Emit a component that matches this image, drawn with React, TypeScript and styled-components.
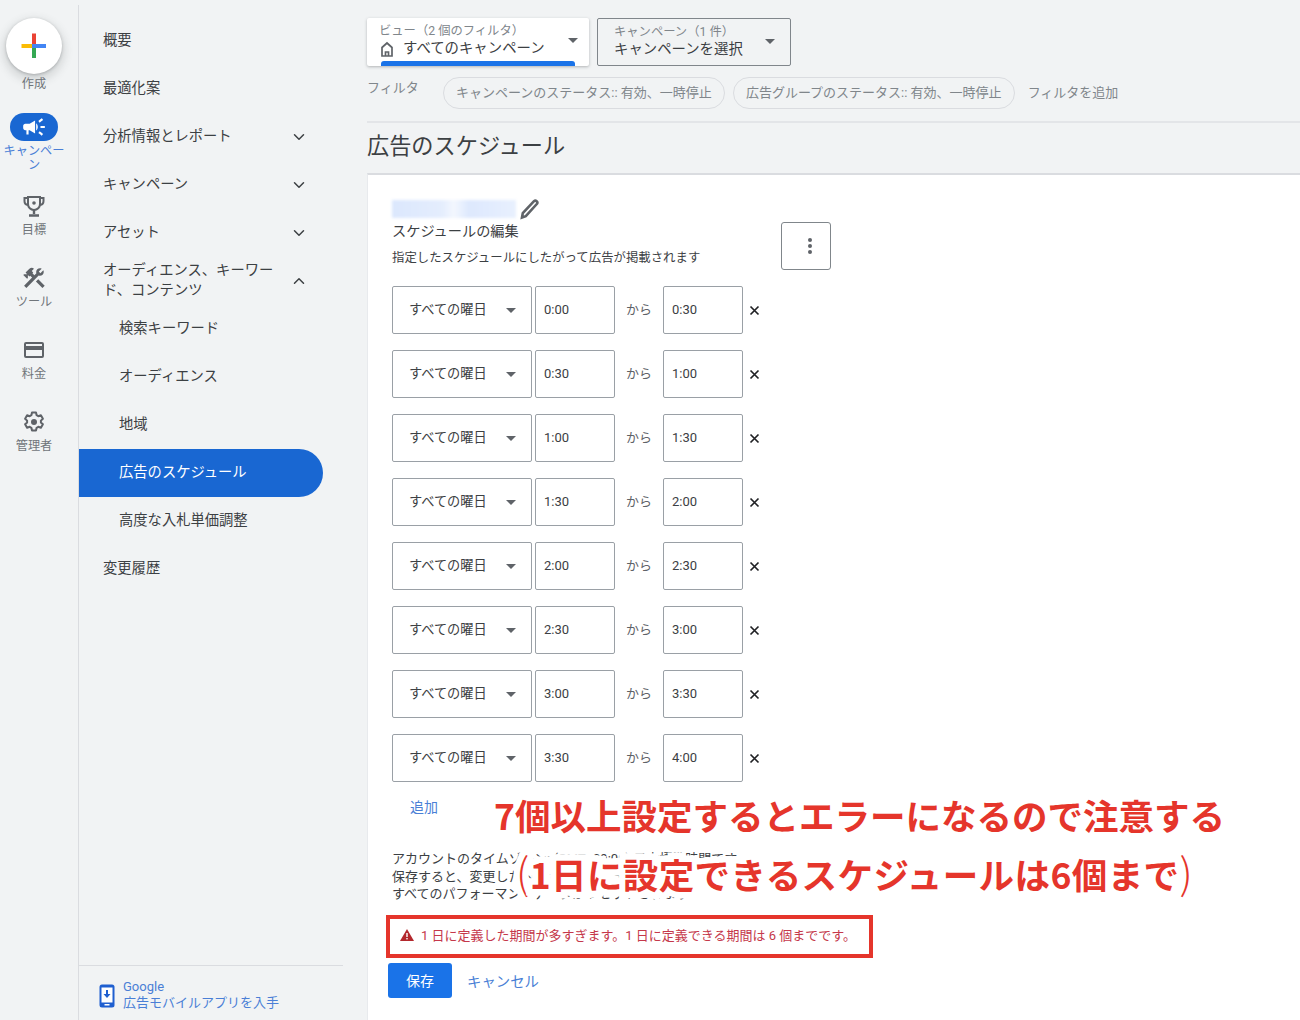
import React from "react";
import styled, { createGlobalStyle } from "styled-components";
import { ChevronDown, ChevronUp } from "lucide-react";
import { MdCampaign, MdConstruction } from "react-icons/md";

const JP = `"Roboto", "Noto Sans CJK JP", sans-serif`;

const GlobalStyle = createGlobalStyle`
  html, body { margin: 0; padding: 0; background: #f1f3f4; }
  body { font-family: ${JP}; color: #3c4043; }
  * { box-sizing: border-box; }
`;

const Page = styled.div`
  position: relative;
  width: 1300px;
  height: 1020px;
  overflow: hidden;
  display: flex;
  background: #f1f3f4;
`;

const Rail = styled.aside`
  width: 79px;
  margin-top: 5px;
  padding-right: 10px;
  border-right: 1px solid #dadce0;
  display: flex;
  flex-direction: column;
  align-items: center;
  flex: none;
`;

const CreateButton = styled.div`
  width: 56px;
  height: 56px;
  margin-top: 13px;
  border-radius: 50%;
  background: #fff;
  box-shadow: 0 1px 3px rgba(60, 64, 67, 0.3), 0 4px 8px 3px rgba(60, 64, 67, 0.15);
  display: flex;
  align-items: center;
  justify-content: center;
`;

const RailLabel = styled.div<{ $active?: boolean }>`
  font-size: 12.2px;
  line-height: 14px;
  text-align: center;
  width: 64px;
  color: ${(p) => (p.$active ? "#4a7fd6" : "#70757a")};
`;

const RailItem = styled.div<{ $h: number; $pad?: number }>`
  height: ${(p) => p.$h}px;
  padding-top: ${(p) => p.$pad ?? 0}px;
  display: flex;
  flex-direction: column;
  align-items: center;
`;

const RailIconWrap = styled.div`
  height: 26px;
  display: flex;
  align-items: center;
  justify-content: center;
  margin-bottom: 4px;
`;

const ActivePill = styled.div`
  width: 48px;
  height: 28px;
  border-radius: 14px;
  background: #1967d2;
  display: flex;
  align-items: center;
  justify-content: center;
  margin-bottom: 3px;
`;

const Nav = styled.nav`
  width: 264px;
  flex: none;
  display: flex;
  flex-direction: column;
  padding-top: 17px;
  position: relative;
`;

const NavRow = styled.div<{ $sub?: boolean; $active?: boolean }>`
  width: 244px;
  height: 48px;
  flex: none;
  display: flex;
  align-items: center;
  justify-content: space-between;
  padding: 0 15px 3px ${(p) => (p.$sub ? 40 : 24)}px;
  font-size: 14.3px;
  line-height: 20px;
  color: ${(p) => (p.$active ? "#fff" : "#3c4043")};
  background: ${(p) => (p.$active ? "#1967d2" : "transparent")};
  border-radius: 0 24px 24px 0;
`;

const NavText = styled.span`
  max-width: 175px;
`;

const NavChevronDown = styled(ChevronDown)`
  margin-top: 3px;
`;

const NavChevronUp = styled(ChevronUp)`
  margin-top: 2px;
`;

const NavFooter = styled.div`
  margin-top: auto;
  height: 55px;
  border-top: 1px solid #dadce0;
  display: flex;
  align-items: flex-start;
  gap: 8px;
  padding: 13px 0 0 20px;
  color: #4a7fd6;
  font-size: 13px;
  line-height: 16px;
`;

const PhoneIcon = styled.div`
  margin-top: 5px;
`;

const Main = styled.main`
  flex: 1;
  margin-left: 24px;
  display: flex;
  flex-direction: column;
  min-width: 0;
`;

const PickerRow = styled.div`
  display: flex;
  gap: 8px;
  padding-top: 18px;
`;

const Picker = styled.div<{ $selected?: boolean }>`
  position: relative;
  height: 48px;
  width: ${(p) => (p.$selected ? 222 : 194)}px;
  border-radius: 2px;
  padding: 5px 0 0 ${(p) => (p.$selected ? 12 : 16)}px;
  background: ${(p) => (p.$selected ? "#fff" : "transparent")};
  border: ${(p) => (p.$selected ? "none" : "1px solid #80868b")};
  box-shadow: ${(p) => (p.$selected ? "0 1px 3px rgba(60,64,67,.35)" : "none")};
`;

const PickerLabel = styled.div`
  font-size: 12.3px;
  line-height: 15px;
  margin-top: 1px;
  color: #80868b;
`;

const PickerValue = styled.div`
  display: flex;
  align-items: center;
  gap: 8px;
  font-size: 14.4px;
  line-height: 20px;
  color: #3c4043;
`;

const PickerCaret = styled.div<{ $right: number }>`
  position: absolute;
  right: ${(p) => p.$right}px;
  top: 20px;
  width: 0;
  height: 0;
  border-left: 5px solid transparent;
  border-right: 5px solid transparent;
  border-top: 5px solid #5f6368;
`;

const PickerBar = styled.div`
  position: absolute;
  left: 14px;
  right: 14px;
  bottom: 0;
  height: 5px;
  background: #1a73e8;
  border-radius: 3px 3px 0 0;
`;

const FilterRow = styled.div`
  height: 46px;
  margin-top: 11px;
  border-bottom: 2px solid #e3e5e8;
  display: flex;
  align-items: flex-start;
  color: #80868b;
  font-size: 13px;
`;

const FilterLabel = styled.span`
  width: 76px;
  line-height: 20px;
  margin-top: 1px;
`;

const Chip = styled.span`
  height: 32px;
  border: 1px solid #dadce0;
  border-radius: 16px;
  padding: 0 12px 3px;
  margin-right: 8px;
  display: flex;
  align-items: center;
`;

const AddFilter = styled.span`
  line-height: 31px;
  margin-left: 5px;
`;

const Title = styled.h1`
  margin: 0;
  height: 50px;
  font-size: 22.2px;
  font-weight: 400;
  line-height: 47px;
  color: #3c4043;
`;

const Card = styled.section`
  flex: 1;
  background: #fff;
  border-top: 2px solid #dadce0;
  border-left: 1px solid #e8eaed;
  padding: 22px 0 0 24px;
`;

const HeadRow = styled.div`
  display: flex;
  align-items: flex-start;
  height: 89px;
`;

const HeadText = styled.div`
  width: 389px;
`;

const NameRow = styled.div`
  display: flex;
  align-items: center;
  height: 24px;
`;

const BlurredName = styled.div`
  width: 124px;
  height: 18px;
  background: linear-gradient(90deg, #dbe7fd 0, #e4edfd 40%, #f3f7fe 50%, #dde8fd 62%, #e8f0fe 100%);
  filter: blur(1.5px);
  margin-right: 3px;
`;

const EditHeading = styled.div`
  font-size: 14.2px;
  line-height: 20px;
  color: #3c4043;
`;

const EditHint = styled.div`
  font-size: 12.4px;
  line-height: 16px;
  margin-top: 9px;
  color: #3c4043;
  white-space: nowrap;
`;

const MoreButton = styled.div`
  width: 50px;
  height: 48px;
  margin-top: 25px;
  padding-left: 8px;
  border: 1px solid #80868b;
  border-radius: 3px;
  display: flex;
  flex-direction: column;
  align-items: center;
  justify-content: center;
  gap: 2px;
`;

const Dot = styled.i`
  width: 4px;
  height: 4px;
  border-radius: 50%;
  background: #5f6368;
`;

const Rows = styled.div`
  display: flex;
  flex-direction: column;
  gap: 16px;
`;

const Row = styled.div`
  display: flex;
  align-items: center;
  height: 48px;
`;

const DaySelect = styled.div`
  position: relative;
  width: 140px;
  height: 48px;
  border: 1px solid #9aa0a6;
  border-radius: 2px;
  display: flex;
  align-items: center;
  padding: 0 0 3px 16px;
  font-size: 13.2px;
  margin-right: 3px;
`;

const SelectCaret = styled.div`
  position: absolute;
  right: 15px;
  top: 21px;
  width: 0;
  height: 0;
  border-left: 5px solid transparent;
  border-right: 5px solid transparent;
  border-top: 5px solid #5f6368;
`;

const TimeBox = styled.div`
  width: 80px;
  height: 48px;
  border: 1px solid #9aa0a6;
  border-radius: 2px;
  display: flex;
  align-items: center;
  padding: 0 0 1px 8px;
  font-size: 13px;
`;

const From = styled.span`
  width: 48px;
  text-align: center;
  font-size: 13px;
  color: #5f6368;
  margin-bottom: 3px;
`;

const Remove = styled.div`
  margin-left: 6px;
  display: flex;
  align-items: center;
`;

const AddLink = styled.div`
  margin: 15px 0 0 18px;
  height: 20px;
  font-size: 14px;
  line-height: 20px;
  color: #4a7fd6;
`;

const Note = styled.div`
  margin-top: 33px;
  font-size: 13px;
  line-height: 17.5px;
  color: #3c4043;
  white-space: nowrap;
`;

const ErrorBox = styled.div`
  width: 487px;
  height: 43px;
  margin: 12px 0 0 -6px;
  border: 4px solid #e5352b;
  display: flex;
  align-items: center;
  gap: 7px;
  padding: 0 0 3px 10px;
  font-size: 13px;
  color: #c5384b;
`;

const Actions = styled.div`
  display: flex;
  align-items: center;
  margin: 5px 0 0 -4px;
  gap: 15px;
`;

const SaveButton = styled.div`
  width: 64px;
  height: 35px;
  background: #1a73e8;
  border-radius: 3px;
  color: #fff;
  font-size: 14px;
  display: flex;
  align-items: center;
  justify-content: center;
`;

const CancelLink = styled.span`
  font-size: 14.4px;
  color: #4a7fd6;
`;

const Annotation = styled.div<{ $top: number; $left: number; $spacing?: number }>`
  position: absolute;
  top: ${(p) => p.$top}px;
  left: ${(p) => p.$left}px;
  font-family: "Noto Sans CJK JP", sans-serif;
  font-size: 35.5px;
  font-weight: 700;
  line-height: 48px;
  letter-spacing: ${(p) => p.$spacing ?? 0}px;
  color: #e5352b;
  white-space: nowrap;
  -webkit-text-stroke: 13px #fff;
  paint-order: stroke fill;
`;

const Paren = styled.span`
  font-size: 42px;
  font-weight: 300;
  line-height: 48px;
`;

const Trophy = () => (
  <svg width="24" height="24" viewBox="0 0 24 24" fill="none" stroke="#5f6368" strokeWidth="2">
    <path d="M6 3h12v7a6 6 0 0 1-12 0z" />
    <path d="M6 4H2.500v3a4 4 0 0 0 3.500 4M18 4h3.500v3a4 4 0 0 1-3.500 4" />
    <path d="M12 16v4M7 21.500h10" strokeWidth="2.400" />
    <circle cx="12" cy="9" r="1.800" fill="#5f6368" stroke="none" />
  </svg>
);

const CardIcon = () => (
  <svg width="24" height="24" viewBox="0 0 24 24" fill="#5f6368">
    <path d="M20 4H4a2 2 0 0 0-2 2v12a2 2 0 0 0 2 2h16a2 2 0 0 0 2-2V6a2 2 0 0 0-2-2zm0 14H4v-6h16zm0-10H4V6h16z" />
  </svg>
);

const Gear = () => (
  <svg width="24" height="24" viewBox="0 0 24 24" fill="none" stroke="#5f6368" strokeWidth="2" strokeLinejoin="round">
    <path d="M10 2.500h4l.6 2.700 1.700 1 2.600-.9 2 3.400-2 1.900v1.800l2 1.900-2 3.400-2.600-.9-1.700 1-.6 2.700h-4l-.6-2.700-1.700-1-2.600.9-2-3.400 2-1.900v-1.800l-2-1.900 2-3.400 2.600.9 1.700-1z" />
    <circle cx="12" cy="12" r="3" fill="#5f6368" stroke="none" />
  </svg>
);

const Plus = () => (
  <svg width="26" height="26" viewBox="0 0 26 26">
    <rect x="11" y="0.500" width="4" height="13" fill="#ea4335" />
    <rect x="11" y="11" width="4" height="14" fill="#34a853" />
    <rect x="0.500" y="11" width="13" height="4" fill="#fbbc04" />
    <rect x="11" y="11" width="14" height="4" fill="#4285f4" />
  </svg>
);

const Home = () => (
  <svg width="16" height="16" viewBox="0 0 16 16" fill="none" stroke="#5f6368" strokeWidth="1.700">
    <path d="M3 15V6.500L8 2l5 4.500V15z" />
    <path d="M6.500 15v-4h3v4" />
  </svg>
);

const Pencil = () => (
  <svg width="22" height="22" viewBox="0 0 22 22" fill="#fff" stroke="#5f6368" strokeWidth="2.600">
    <path d="M3 19.500l.8-4.500L15 3.200a2 2 0 0 1 3 2.600L6.800 18.200z" />
  </svg>
);

const Cross = () => (
  <svg width="11" height="11" viewBox="0 0 11 11" stroke="#202124" strokeWidth="1.700">
    <path d="M1.500 1.500l8 8M9.500 1.500l-8 8" />
  </svg>
);

const Warning = () => (
  <svg width="14" height="12" viewBox="0 0 14 12" fill="#b3282d">
    <path d="M7 0l7 12H0z" />
    <rect x="6.300" y="4" width="1.400" height="4" fill="#fff" />
    <rect x="6.300" y="9" width="1.400" height="1.400" fill="#fff" />
  </svg>
);

const Phone = () => (
  <svg width="16" height="24" viewBox="0 0 16 24">
    <rect x="0.500" y="0.500" width="15" height="23" rx="2.500" fill="#1f5fd0" />
    <rect x="2.500" y="3.500" width="11" height="15" fill="#fff" />
    <path d="M7 6h2v4h2.500L8 14l-3.500-4H7z" fill="#1f5fd0" />
    <rect x="5.500" y="20" width="5" height="1.500" fill="#fff" />
  </svg>
);

const navItems: { label: string; sub?: boolean; active?: boolean; icon?: "down" | "up" }[] = [
  { label: "概要" },
  { label: "最適化案" },
  { label: "分析情報とレポート", icon: "down" },
  { label: "キャンペーン", icon: "down" },
  { label: "アセット", icon: "down" },
  { label: "オーディエンス、キーワード、コンテンツ", icon: "up" },
  { label: "検索キーワード", sub: true },
  { label: "オーディエンス", sub: true },
  { label: "地域", sub: true },
  { label: "広告のスケジュール", sub: true, active: true },
  { label: "高度な入札単価調整", sub: true },
  { label: "変更履歴" },
];

const slots = ["0:00", "0:30", "1:00", "1:30", "2:00", "2:30", "3:00", "3:30", "4:00"];

export default function App() {
  return (
    <Page>
      <GlobalStyle />
      <Rail>
        <CreateButton>
          <Plus />
        </CreateButton>
        <RailItem $h={39} $pad={3}>
          <RailLabel>作成</RailLabel>
        </RailItem>
        <RailItem $h={80}>
          <ActivePill>
            <MdCampaign size={26} color="#fff" />
          </ActivePill>
          <RailLabel $active>キャンペーン</RailLabel>
        </RailItem>
        <RailItem $h={72}>
          <RailIconWrap>
            <Trophy />
          </RailIconWrap>
          <RailLabel>目標</RailLabel>
        </RailItem>
        <RailItem $h={72}>
          <RailIconWrap>
            <MdConstruction size={26} color="#5f6368" />
          </RailIconWrap>
          <RailLabel>ツール</RailLabel>
        </RailItem>
        <RailItem $h={72}>
          <RailIconWrap>
            <CardIcon />
          </RailIconWrap>
          <RailLabel>料金</RailLabel>
        </RailItem>
        <RailItem $h={72}>
          <RailIconWrap>
            <Gear />
          </RailIconWrap>
          <RailLabel>管理者</RailLabel>
        </RailItem>
      </Rail>
      <Nav>
        {navItems.map((item) => (
          <NavRow key={item.label} $sub={item.sub} $active={item.active}>
            <NavText>{item.label}</NavText>
            {item.icon === "down" && <NavChevronDown size={18} color="#3c4043" strokeWidth={2} />}
            {item.icon === "up" && <NavChevronUp size={18} color="#3c4043" strokeWidth={2} />}
          </NavRow>
        ))}
        <NavFooter>
          <PhoneIcon>
            <Phone />
          </PhoneIcon>
          <div>
            Google
            <br />
            広告モバイルアプリを入手
          </div>
        </NavFooter>
      </Nav>
      <Main>
        <PickerRow>
          <Picker $selected>
            <PickerLabel>ビュー（2 個のフィルタ）</PickerLabel>
            <PickerValue>
              <Home />
              すべてのキャンペーン
            </PickerValue>
            <PickerCaret $right={11} />
            <PickerBar />
          </Picker>
          <Picker>
            <PickerLabel>キャンペーン（1 件）</PickerLabel>
            <PickerValue>キャンペーンを選択</PickerValue>
            <PickerCaret $right={15} />
          </Picker>
        </PickerRow>
        <FilterRow>
          <FilterLabel>フィルタ</FilterLabel>
          <Chip>キャンペーンのステータス:: 有効、一時停止</Chip>
          <Chip>広告グループのステータス:: 有効、一時停止</Chip>
          <AddFilter>フィルタを追加</AddFilter>
        </FilterRow>
        <Title>広告のスケジュール</Title>
        <Card>
          <HeadRow>
            <HeadText>
              <NameRow>
                <BlurredName />
                <Pencil />
              </NameRow>
              <EditHeading>スケジュールの編集</EditHeading>
              <EditHint>指定したスケジュールにしたがって広告が掲載されます</EditHint>
            </HeadText>
            <MoreButton>
              <Dot />
              <Dot />
              <Dot />
            </MoreButton>
          </HeadRow>
          <Rows>
            {slots.slice(0, 8).map((start, i) => (
              <Row key={start}>
                <DaySelect>
                  すべての曜日
                  <SelectCaret />
                </DaySelect>
                <TimeBox>{start}</TimeBox>
                <From>から</From>
                <TimeBox>{slots[i + 1]}</TimeBox>
                <Remove>
                  <Cross />
                </Remove>
              </Row>
            ))}
          </Rows>
          <AddLink>追加</AddLink>
          <Note>
            アカウントのタイムゾーン: (GMT+09:00) 日本標準時間です
            <br />
            保存すると、変更した内容が適用されます
            <br />
            すべてのパフォーマンスデータがリセットされます
          </Note>
          <ErrorBox>
            <Warning />1 日に定義した期間が多すぎます。1 日に定義できる期間は 6 個までです。
          </ErrorBox>
          <Actions>
            <SaveButton>保存</SaveButton>
            <CancelLink>キャンセル</CancelLink>
          </Actions>
        </Card>
      </Main>
      <Annotation $top={791} $left={494}>7個以上設定するとエラーになるので注意する</Annotation>
      <Annotation $top={847} $left={516} $spacing={0.4}>
        <Paren>(</Paren>1日に設定できるスケジュールは6個まで<Paren>)</Paren>
      </Annotation>
    </Page>
  );
}
